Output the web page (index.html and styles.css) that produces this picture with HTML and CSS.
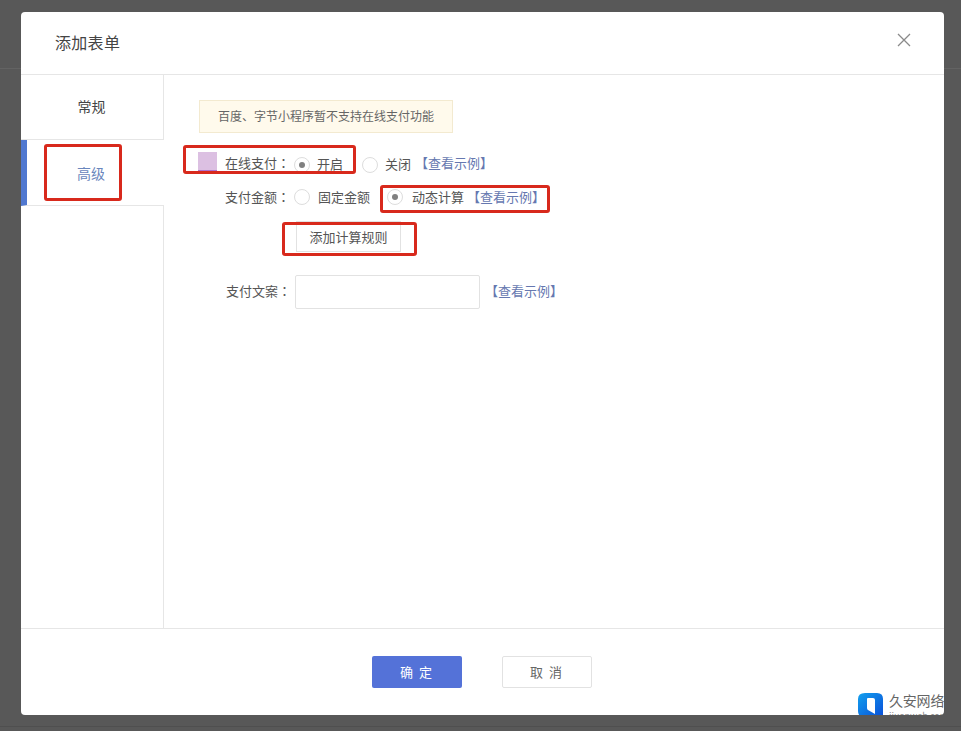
FILE: index.html
```html
<!DOCTYPE html>
<html lang="zh-CN">
<head>
<meta charset="utf-8">
<title>添加表单</title>
<link rel="stylesheet" href="styles.css">
</head>
<body>
<div class="backdrop-line"></div>
<div class="backdrop-line backdrop-line-low"></div>
<div class="modal">
  <header class="modal-head">
    <h1 class="modal-title">添加表单</h1>
    <svg class="close" width="14" height="14" viewBox="0 0 14 14"><path d="M1 1 L13 13 M13 1 L1 13" stroke="#8a8a8a" stroke-width="1.3" fill="none"/></svg>
  </header>
  <div class="modal-body">
    <nav class="side">
      <div class="tab">常规</div>
      <div class="tab tab-active">高级</div>
    </nav>
    <main class="content">
      <div class="notice">百度、字节小程序暂不支持在线支付功能</div>
      <div class="row row-pay">
        <span class="swatch"></span>
        <span class="label" lang="zh-TW">在线支付：</span>
        <span class="radio checked"></span><span class="opt opt-open">开启</span>
        <span class="radio"></span><span class="opt opt-close">关闭</span>
        <a class="link">【查看示例】</a>
      </div>
      <div class="row row-amount">
        <span class="label" lang="zh-TW">支付金额：</span>
        <span class="radio"></span><span class="opt opt-fixed">固定金额</span>
        <span class="radio checked"></span><span class="opt opt-dyn">动态计算</span>
        <a class="link">【查看示例】</a>
      </div>
      <button class="add-rule">添加计算规则</button>
      <div class="row row-copy">
        <span class="label" lang="zh-TW">支付文案：</span>
        <input class="text-input" type="text">
        <a class="link">【查看示例】</a>
      </div>
    </main>
  </div>
  <footer class="modal-foot">
    <button class="btn btn-primary">确 定</button>
    <button class="btn btn-plain">取 消</button>
  </footer>
  <div class="mark mark-a"></div>
  <div class="mark mark-b"></div>
  <div class="mark mark-c"></div>
  <div class="mark mark-d"></div>
  <div class="brand">
    <svg class="brand-logo" width="26" height="24" viewBox="0 0 26 24">
      <defs><linearGradient id="bg" x1="0" y1="0" x2="1" y2="1"><stop offset="0" stop-color="#12a0ee"/><stop offset="1" stop-color="#0a4fd8"/></linearGradient></defs>
      <path d="M7 0 H19 Q25 0 25 6 V24 H6 Q0 24 0 18 V6 Q0 0 7 0 Z" fill="url(#bg)"/>
      <path d="M10 5 H15 Q17 5 17 7 V21 L10 17 Q9 16.500 9 15 V6 Q9 5 10 5 Z" fill="#fff"/>
    </svg>
    <div class="brand-text">
      <div class="brand-name">久安网络</div>
      <div class="brand-url">jiuanweb.com</div>
    </div>
  </div>
</div>
</body>
</html>
```
FILE: styles.css
```css
* { box-sizing: border-box; }
html, body { margin: 0; height: 100%; }
body {
  background: #585858;
  font-family: "Noto Sans CJK SC", "Liberation Sans", sans-serif;
  font-size: 13px;
  color: #555;
  overflow: hidden;
  padding: 12px 0 0 21px;
}
.backdrop-line {
  position: absolute;
  left: 0;
  right: 0;
  top: 68px;
  height: 1px;
  background: #636363;
}
.backdrop-line-low { top: 726px; background: #4f4f4f; }
.modal {
  position: relative;
  width: 923px;
  height: 703px;
  background: #fff;
  border-radius: 4px;
  overflow: hidden;
  display: flex;
  flex-direction: column;
}
.modal-head {
  height: 63px;
  flex: none;
  border-bottom: 1px solid #e6e6e6;
  display: flex;
  justify-content: space-between;
  padding: 18px 33px 0 34px;
}
.modal-title {
  margin: 0;
  font-size: 16px;
  line-height: 24px;
  font-weight: 400;
  color: #444;
  letter-spacing: 0.3px;
}
.close { margin-top: 3px; }
.modal-body { flex: 1; display: flex; min-height: 0; }
.side {
  width: 143px;
  flex: none;
  border-right: 1px solid #e6e6e6;
}
.tab {
  height: 65px;
  border-bottom: 1px solid #e6e6e6;
  text-align: center;
  line-height: 63px;
  font-size: 14px;
  color: #444;
  padding-right: 1px;
}
.tab-active {
  height: 66px;
  line-height: 66px;
  color: #6a86bd;
  border-left: 6px solid #5078d0;
  margin-right: -1px;
  padding-right: 9px;
  background: #fff;
  position: relative;
}
.content { flex: 1; padding: 25px 0 0 35px; }
.notice {
  width: 254px;
  height: 33px;
  background: #fffaec;
  border: 1px solid #f3ead0;
  padding-left: 18px;
  line-height: 30px;
  font-size: 12px;
  color: #666;
}
.row { display: flex; align-items: center; }
.row-pay { height: 20px; margin: 19px 0 0 -1px; }
.swatch {
  width: 19px;
  height: 20px;
  margin-right: 8px;
  background: #dcc0e2;
  border-bottom: 2px solid #ad6fcd;
}
.label { width: 69px; flex: none; }
.row-pay .radio { top: 3px; }
.row-amount .radio { top: 1px; }
.radio {
  position: relative;
  width: 16px;
  height: 16px;
  flex: none;
  border: 1px solid #ddd;
  border-radius: 50%;
  background: #fff;
}
.checked::after {
  content: "";
  position: absolute;
  left: 4px;
  top: 4px;
  width: 6px;
  height: 6px;
  border-radius: 50%;
  background: #808080;
}
.opt { margin-left: 7px; }
.opt-open { margin-right: 19px; padding-top: 3px; }
.opt-close { margin-right: 4px; padding-top: 2px; }
.opt-fixed { margin-left: 8px; margin-right: 17px; padding-top: 1px; }
.opt-dyn { margin-left: 9px; margin-right: 3px; padding-top: 1px; }
.link { color: #6678b0; }
.row-amount { height: 20px; margin: 14px 0 0 26px; }
.add-rule {
  display: block;
  width: 105px;
  height: 31px;
  margin: 15px 0 0 97px;
  padding: 0;
  background: #fff;
  border: 1px solid #e2e2e2;
  font: inherit;
  color: #555;
}
.row-copy { margin: 23px 0 0 27px; }
.row-copy .label { width: 69px; padding-bottom: 4px; }
.row-copy .link { padding-bottom: 4px; }
.text-input {
  width: 185px;
  height: 34px;
  border: 1px solid #e2e2e2;
  border-radius: 2px;
  margin-right: 5px;
  background: #fff;
}
.modal-foot {
  height: 87px;
  flex: none;
  border-top: 1px solid #e6e6e6;
  display: flex;
  justify-content: center;
  gap: 40px;
  padding: 27px 2px 0 0;
}
.btn {
  width: 90px;
  height: 32px;
  padding: 0 0 2px;
  font: inherit;
  word-spacing: 1px;
  letter-spacing: 1px;
  border-radius: 2px;
}
.btn-primary { background: #5472d8; border: none; color: #fff; }
.btn-plain { background: #fff; border: 1px solid #e2e2e2; color: #666; }
.mark {
  position: absolute;
  border: 3px solid #d8291c;
  border-radius: 3px;
}
.mark-a { left: 23px; top: 132px; width: 78px; height: 57px; }
.mark-b { left: 162px; top: 133px; width: 173px; height: 29px; }
.mark-c { left: 359px; top: 173px; width: 170px; height: 28px; }
.mark-d { left: 261px; top: 210px; width: 135px; height: 34px; }
.brand {
  position: absolute;
  left: 837px;
  top: 681px;
  display: flex;
  gap: 4px;
  width: 120px;
}
.brand-logo { flex: none; }
.brand-text { flex: none; }
.brand-name { font-size: 14px; line-height: 14px; color: #666; white-space: nowrap; margin-left: 1px; letter-spacing: -0.2px; }
.brand-url { font-size: 9px; line-height: 11px; color: #888; white-space: nowrap; margin: 3px 0 0 1px; }
```
